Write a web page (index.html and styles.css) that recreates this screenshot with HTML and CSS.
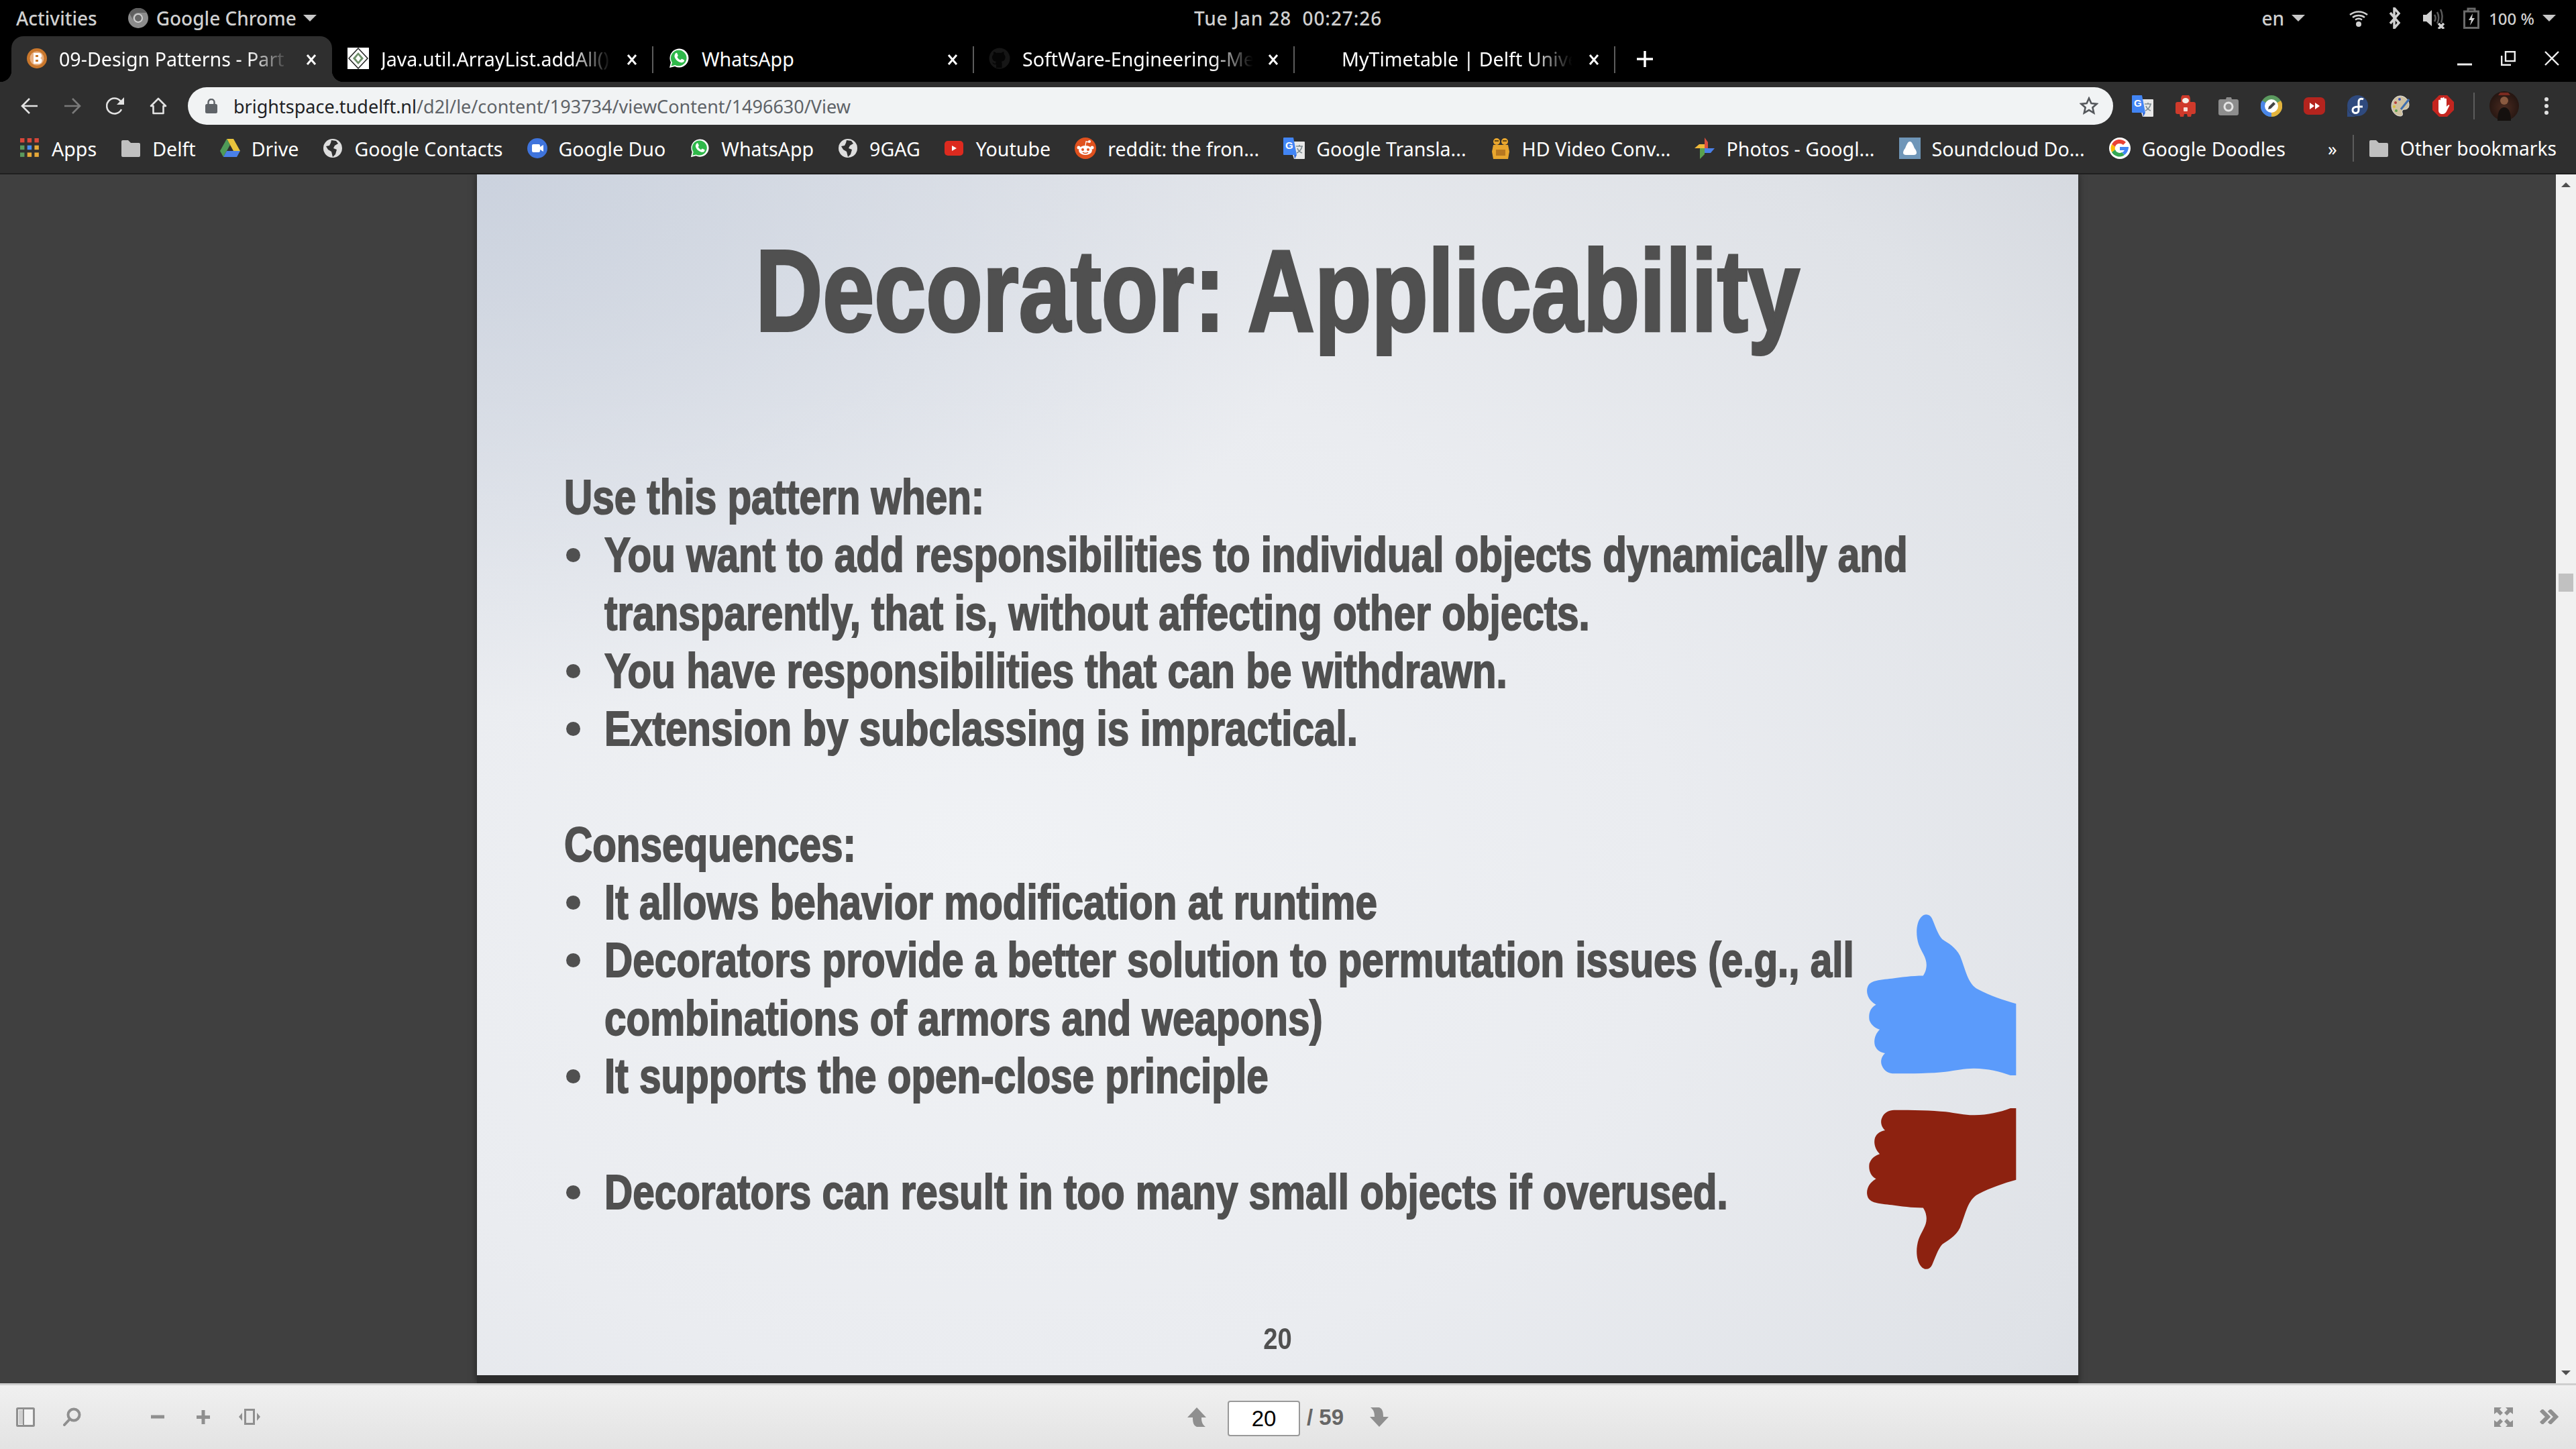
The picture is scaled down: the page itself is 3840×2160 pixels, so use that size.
FILE: index.html
```html
<!DOCTYPE html>
<html lang="en">
<head>
<meta charset="utf-8">
<title>Decorator: Applicability</title>
<link rel="stylesheet" href="styles.css">
</head>
<body>
<svg class="defs" width="0" height="0" aria-hidden="true">
  <defs>
    <symbol id="wa" viewBox="0 0 32 32"><path fill="#fff" d="M2 30l2-8A14 14 0 1 1 10 28z"/><path fill="#2fb84a" d="M4.500 27.500l1.500-5.300A11.800 11.800 0 1 1 10.300 26z"/><path fill="#fff" d="M11 8.500c1-1 2-.8 2.400 0l1.300 3c.2.600-.8 1.800-1.200 2.400 1 2 2.600 3.500 4.700 4.500.7-.6 1.700-2 2.400-1.700l3 1.500c.7.400.6 1.500 0 2.400-1 1.500-3 2-5 1.400-5-1.400-8-4.700-9-8.300-.4-1.700.3-3.800 1.400-5.200z"/></symbol>
    <symbol id="globe" viewBox="0 0 30 30"><circle cx="15" cy="15" r="14" fill="#dedede"/><path fill="#2f2f2f" d="M13 3l7 1 3 4-5 3-2 4 5 2-2 7-4 4-2-8-5-3-3-5 5-1 2-4z"/></symbol>
    <symbol id="folder" viewBox="0 0 30 30"><path fill="#c0c0c0" d="M1 5a2 2 0 0 1 2-2h8l4 4h12a2 2 0 0 1 2 2v17a2 2 0 0 1-2 2H3a2 2 0 0 1-2-2z"/></symbol>
    <symbol id="x" viewBox="0 0 16 16"><path d="M2 1l12 14M14 1L2 15" stroke="#fff" stroke-width="3"/></symbol>
    <symbol id="gt" viewBox="0 0 32 32"><path fill="#e8e8e8" d="M8 6h23a1 1 0 0 1 1 1v24a1 1 0 0 1-1 1H16z"/><path fill="#4285f4" d="M1 0h14l5 26H1a1 1 0 0 1-1-1V1a1 1 0 0 1 1-1z"/><path fill="#3367d6" d="M16 26h4l-3 6z"/><path d="M19 13h10M24 11v2M28 13c-1 5-5 9-8 10M21 16c1 3 4 6 7 7" fill="none" stroke="#7d8a90" stroke-width="1.600"/><text x="3" y="17" class="svg-g">G</text></symbol>
    <symbol id="hand" viewBox="240 100 680 640" preserveAspectRatio="none"><path d="M915 461C860 448 800 430 745 405C700 385 690 330 665 275C645 240 610 225 585 210C565 190 555 160 540 130C530 110 505 108 490 125C470 145 465 190 480 230C495 265 520 285 514 320C512 335 505 345 500 352C450 352 400 358 360 363C320 367 270 368 255 390C240 415 255 450 290 465C265 475 255 500 260 525C268 545 285 555 306 562C285 580 278 605 285 625C295 645 310 650 330 654C315 665 308 685 315 700C325 725 350 733 370 733C450 733 540 732 600 726C650 720 690 712 730 713C800 714 860 728 915 749Z"/></symbol>
  </defs>
</svg>

<header class="sysbar">
  <div class="sys-left">
    <span class="sys-activities">Activities</span>
    <span class="sys-app">
      <svg width="30" height="30" viewBox="0 0 30 30"><circle cx="15" cy="15" r="15" fill="#8c8c8c"/><path d="M15 7h13a15 15 0 0 0-26 1l6 11a8 8 0 0 1 7-12z" fill="#5f5f5f"/><circle cx="15" cy="15" r="7" fill="#d0d0d0"/><circle cx="15" cy="15" r="5" fill="#666"/></svg>
      <span>Google Chrome</span>
      <i class="caret caret-app"></i>
    </span>
  </div>
  <div class="sys-clock">Tue Jan 28&nbsp; 00:27:26</div>
  <div class="sys-right">
    <span class="sys-lang">en</span><i class="caret caret-lang"></i>
    <svg class="st-wifi" width="28" height="28" viewBox="0 0 28 28"><g fill="none" stroke="#d0d0d0" stroke-width="2.500"><path d="M1 9c8-6 18-6 26 0"/><path d="M5 13c5-4 13-4 18 0"/></g><path d="M9 16.500c3-2 7-2 10 0" fill="none" stroke="#d0d0d0" stroke-width="2.500"/><circle cx="14" cy="23" r="4" fill="#d0d0d0"/></svg>
    <svg class="st-bt" width="20" height="32" viewBox="0 0 20 32"><path d="M3 8l13 15-7 8V1l7 8L3 24" fill="none" stroke="#cfcfcf" stroke-width="3.500"/></svg>
    <svg class="st-vol" width="34" height="32" viewBox="0 0 34 32"><path fill="#d0d0d0" d="M0 11h5l8-7v24l-8-7H0z"/><path d="M17 11c2 3 2 7 0 10M21 7c3 5 3 12 0 17M26 3c3 6 3 14 1 20" fill="none" stroke="#5a5a5a" stroke-width="2.500"/><path d="M23 24l8 8M31 24l-8 8" stroke="#d0d0d0" stroke-width="3.500"/></svg>
    <svg class="st-bat" width="24" height="32" viewBox="0 0 24 32"><path d="M1.500 6h21v24.500h-21zM7 2h10v4H7z" fill="none" stroke="#6a6a6a" stroke-width="3"/><path fill="#d0d0d0" d="M14 9l-6 10h4l-2 8 7-11h-4z"/></svg>
    <span class="sys-batt">100 %</span><i class="caret caret-batt"></i>
  </div>
</header>

<nav class="tabstrip">
  <div class="tab tab-active">
    <svg class="fav" width="30" height="30" viewBox="0 0 30 30"><circle cx="15" cy="15" r="15" fill="#c9772c"/><circle cx="15" cy="15" r="10.500" fill="#e9b184"/><path d="M10 7h8a4 4 0 0 1 2 7.500 4.500 4.500 0 0 1-2 8.500h-8z" fill="#fff"/><path d="M13 10h4v3h-4zM13 17h4v3h-4z" fill="#c9772c"/></svg>
    <span class="tab-title">09-Design Patterns - Part</span>
    <svg class="tab-x" width="16" height="16"><use href="#x"/></svg>
  </div>
  <div class="tab">
    <svg class="fav" width="32" height="32" viewBox="0 0 32 32"><rect width="32" height="32" fill="#fff"/><path d="M16 1l14 15-14 15L2 16z" fill="none" stroke="#222" stroke-width="1.500"/><path d="M16 7l8 9-8 9-8-9z" fill="#6f8f6a"/><path d="M16 11l4 5-4 5-4-5z" fill="#fff"/></svg>
    <span class="tab-title">Java.util.ArrayList.addAll()</span>
    <svg class="tab-x" width="16" height="16"><use href="#x"/></svg>
  </div>
  <div class="tab">
    <svg class="fav" width="32" height="32"><use href="#wa"/></svg>
    <span class="tab-title tab-plain">WhatsApp</span>
    <svg class="tab-x" width="16" height="16"><use href="#x"/></svg>
  </div>
  <div class="tab">
    <svg class="fav" width="32" height="32" viewBox="0 0 32 32"><circle cx="16" cy="16" r="15.500" fill="#161616"/><path d="M11 30v-5c-4 1-5-2-6-3 2 0 3 2 5 2 0-2 1-3 1-3-4-1-6-3-6-7 0-2 1-3 2-4 0-1-.3-3 .3-4 1.500 0 3 1 4 2 2-.5 5-.5 7 0 1-1 2.500-2 4-2 .6 1 .3 3 .3 4 1 1 2 2 2 4 0 4-2 6-6 7 1 1 1 2 1 3v6z" fill="#050505"/></svg>
    <span class="tab-title">SoftWare-Engineering-Me</span>
    <svg class="tab-x" width="16" height="16"><use href="#x"/></svg>
  </div>
  <div class="tab">
    <span class="fav fav-blank"></span>
    <span class="tab-title">MyTimetable | Delft Unive</span>
    <svg class="tab-x" width="16" height="16"><use href="#x"/></svg>
  </div>
  <svg class="newtab" width="24" height="24" viewBox="0 0 24 24"><path d="M12 0v24M0 12h24" stroke="#fff" stroke-width="3.500"/></svg>
  <div class="winctl">
    <svg width="22" height="22" viewBox="0 0 22 22"><path d="M0 20h22" stroke="#eee" stroke-width="3"/></svg>
    <svg width="22" height="22" viewBox="0 0 22 22"><path d="M1.200 7v13.800H15" fill="none" stroke="#eee" stroke-width="2.400"/><rect x="7" y="1.200" width="13.800" height="13.800" fill="none" stroke="#eee" stroke-width="2.400"/></svg>
    <svg width="22" height="22" viewBox="0 0 22 22"><path d="M1 1l20 20M21 1L1 21" stroke="#eee" stroke-width="2.400"/></svg>
  </div>
</nav>

<div class="toolbar">
  <span class="tb-slot"><svg width="26" height="26" viewBox="0 0 26 26"><path d="M25 13H3M13 2L2 13l11 11" fill="none" stroke="#e2e2e2" stroke-width="2.600"/></svg></span>
  <span class="tb-slot"><svg width="26" height="26" viewBox="0 0 26 26"><path d="M1 13h22M13 2l11 11-11 11" fill="none" stroke="#7a7a7a" stroke-width="2.600"/></svg></span>
  <span class="tb-slot"><svg width="28" height="26" viewBox="0 0 28 26"><path d="M23 18a11.500 11.500 0 1 1-2-13l3 3" fill="none" stroke="#e2e2e2" stroke-width="2.600"/><path d="M27 0v11H16z" fill="#e2e2e2"/></svg></span>
  <span class="tb-slot"><svg width="26" height="26" viewBox="0 0 26 26"><path d="M2 13L13 2l11 11h-3.500v11h-15V13z" fill="none" stroke="#e2e2e2" stroke-width="2.600" stroke-linejoin="round"/></svg></span>
  <div class="omnibox">
    <svg class="lock" width="18" height="22" viewBox="0 0 18 22"><rect y="8" width="18" height="14" rx="2.500" fill="#5f6368"/><path d="M4.500 9V5.500a4.500 4.500 0 0 1 9 0V9" fill="none" stroke="#5f6368" stroke-width="2.400"/></svg>
    <span class="url"><b>brightspace.tudelft.nl</b>/d2l/le/content/193734/viewContent/1496630/View</span>
    <svg class="star" width="28" height="28" viewBox="0 0 28 28"><path d="M14 2.500l3.400 7.600 8.100.8-6.100 5.400 1.800 8L14 20.100 6.800 24.300l1.800-8-6.100-5.400 8.100-.8z" fill="none" stroke="#55585c" stroke-width="2.600"/></svg>
  </div>
  <div class="exts">
    <span class="tb-slot"><svg width="32" height="32"><use href="#gt"/></svg></span>
    <span class="tb-slot"><svg width="30" height="32" viewBox="0 0 30 32"><path fill="#cf3a2b" d="M8 5a7 7 0 0 1 14 0v5h5a3 3 0 0 1 3 3v12a3 3 0 0 1-3 3h-3l-1 4h-5l-1-4h-4l-1 4H7l-1-4H3a3 3 0 0 1-3-3V13a3 3 0 0 1 3-3h5z"/><ellipse cx="15" cy="8" rx="5" ry="4" fill="#f4efe8"/><rect x="12" y="18" width="6" height="6" rx="1" fill="#f6dcd6"/></svg></span>
    <span class="tb-slot"><svg width="30" height="28" viewBox="0 0 30 28"><path fill="#8d8d8d" d="M8 4h3l1-3h7l1 3h7a3 3 0 0 1 3 3v18a3 3 0 0 1-3 3H3a3 3 0 0 1-3-3V7a3 3 0 0 1 3-3h5z"/><circle cx="15" cy="15" r="7.500" fill="#e4e4e4"/><circle cx="15" cy="15" r="4.500" fill="#8d8d8d"/></svg></span>
    <span class="tb-slot"><svg width="32" height="32" viewBox="0 0 32 32"><circle cx="16" cy="16" r="16" fill="#5b9a5f"/><path d="M16 16L2 8a16 16 0 0 0 14 24z" fill="#4a86e8"/><path d="M16 16l14-8a16 16 0 0 1-14 24z" fill="#e3b33c"/><circle cx="16" cy="16" r="10" fill="#fff"/><path d="M11 21l1-4 7-7 3 3-7 7z" fill="#444"/></svg></span>
    <span class="tb-slot"><svg width="32" height="26" viewBox="0 0 32 26"><rect width="32" height="26" rx="7" fill="#b4241e"/><path d="M9 8l7 5-7 5zM17 8l7 5-7 5z" fill="#fff"/></svg></span>
    <span class="tb-slot"><svg width="31" height="32" viewBox="0 0 31 32"><circle cx="15.500" cy="15.500" r="15.500" fill="#2f4a7e"/><path d="M0 16v16h16a16 16 0 0 1-16-16z" fill="#2f4a7e"/><path d="M24 6c-4-2-7 0-7 4v12c0 6-9 6-9 0 0-3 3-5 8-5h7" fill="none" stroke="#fff" stroke-width="3"/></svg></span>
    <span class="tb-slot"><svg width="28" height="32" viewBox="0 0 28 32"><path fill="#cfc1a0" stroke="#e8e8e8" d="M14 1C7 1 1 8 1 16s6 15 13 15c4 0 4-3 3-5-1-3 1-5 4-5 4 0 6-3 6-7C27 7 21 1 14 1z"/><circle cx="13" cy="6" r="2" fill="#3b4fb5"/><circle cx="7" cy="11" r="2" fill="#b5403b"/><circle cx="5" cy="17" r="2" fill="#d8c23c"/><circle cx="8" cy="23" r="2" fill="#5da24d"/><path d="M27 6L15 21" stroke="#3f6fb0" stroke-width="3"/></svg></span>
    <span class="tb-slot"><svg width="32" height="32" viewBox="0 0 32 32"><path fill="#c4251f" d="M10 0h12l10 10v12L22 32H10L0 22V10z"/><path fill="#fff" d="M9 15V8a1.500 1.500 0 0 1 3 0V5a1.500 1.500 0 0 1 3 0v-.500a1.500 1.500 0 0 1 3 0V6a1.500 1.500 0 0 1 3 0v11l2-2c2-2 3 0 2 1l-4 8c-1 2-3 4-6 4-4 0-6-2-6-6z"/></svg></span>
  </div>
  <i class="tb-sep"></i>
  <svg class="avatar" width="44" height="44" viewBox="0 0 44 44"><defs><radialGradient id="av" cx="50%" cy="55%" r="60%"><stop offset="0" stop-color="#4a2a20"/><stop offset="1" stop-color="#20130f"/></radialGradient></defs><circle cx="22" cy="22" r="22" fill="url(#av)"/><circle cx="22" cy="14" r="6" fill="#8a5a40"/><path d="M12 44c0-14 4-20 10-20s10 6 10 20z" fill="#15100e"/><path d="M16 2h12l3 4H13z" fill="#7a2a20"/></svg>
  <svg class="menu" width="32" height="26" viewBox="0 0 32 26"><g fill="#e2e2e2"><circle cx="16" cy="3" r="3"/><circle cx="16" cy="13" r="3"/><circle cx="16" cy="23" r="3"/></g></svg>
</div>

<div class="bookmarks">
  <div class="bm-list">
    <span class="bm"><svg width="30" height="30" viewBox="0 0 28 28"><g class="apps"><rect width="6" height="6" fill="#d7473a"/><rect x="10" width="6" height="6" fill="#d7473a"/><rect x="20" width="6" height="6" fill="#d7473a"/><rect y="10" width="6" height="6" fill="#5a9a5e"/><rect x="10" y="10" width="6" height="6" fill="#4a8cf0"/><rect x="20" y="10" width="6" height="6" fill="#e6a838"/><rect y="20" width="6" height="6" fill="#5a9a5e"/><rect x="10" y="20" width="6" height="6" fill="#e6a838"/><rect x="20" y="20" width="6" height="6" fill="#e6a838"/></g></svg>Apps</span>
    <span class="bm"><svg width="30" height="30"><use href="#folder"/></svg>Delft</span>
    <span class="bm"><svg width="30" height="30" viewBox="0 0 30 30"><path fill="#e8c33c" d="M10 1h10l10 18H20z"/><path fill="#4f9a58" d="M10 1l5 9-10 18-5-9z"/><path fill="#4a80e8" d="M10 19h20l-5 9H5z"/></svg>Drive</span>
    <span class="bm"><svg width="30" height="30"><use href="#globe"/></svg>Google Contacts</span>
    <span class="bm"><svg width="30" height="30" viewBox="0 0 30 30"><circle cx="15" cy="15" r="15" fill="#3f74dc"/><rect x="7" y="9" width="12" height="12" rx="2" fill="#fff"/><path d="M19 13l5-3v10l-5-3z" fill="#fff"/></svg>Google Duo</span>
    <span class="bm"><svg width="30" height="30"><use href="#wa"/></svg>WhatsApp</span>
    <span class="bm"><svg width="30" height="30"><use href="#globe"/></svg>9GAG</span>
    <span class="bm"><svg width="30" height="30" viewBox="0 0 30 30"><rect x="0" y="4" width="28" height="22" rx="5" fill="#dd2a1f"/><path d="M11 11l7 4-7 4z" fill="#fff"/></svg>Youtube</span>
    <span class="bm"><svg width="32" height="32" viewBox="0 0 32 32"><circle cx="16" cy="16" r="16" fill="#e0511e"/><ellipse cx="16" cy="19" rx="10" ry="7" fill="#fff"/><circle cx="6" cy="15" r="2.500" fill="#fff"/><circle cx="26" cy="15" r="2.500" fill="#fff"/><circle cx="12" cy="18" r="2" fill="#e0511e"/><circle cx="20" cy="18" r="2" fill="#e0511e"/><circle cx="22" cy="6" r="2" fill="#fff"/><path d="M16 12l1-6 5 1" fill="none" stroke="#fff" stroke-width="1.300"/><path d="M12 22c2 2 6 2 8 0" fill="none" stroke="#e0511e" stroke-width="1.500"/></svg>reddit: the fron...</span>
    <span class="bm"><svg width="32" height="32"><use href="#gt"/></svg>Google Transla...</span>
    <span class="bm"><svg width="30" height="32" viewBox="0 0 30 32"><circle cx="9" cy="6" r="5" fill="#e8a62e"/><circle cx="21" cy="6" r="5" fill="#e8a62e"/><path d="M4 11h22l2 10-2 11H4L2 21z" fill="#e8a62e"/><rect x="8" y="18" width="14" height="9" fill="#b87820"/><path d="M6 5h6M18 5h6" stroke="#6a4a10" stroke-width="2"/></svg>HD Video Conv...</span>
    <span class="bm"><svg width="30" height="32" viewBox="0 0 30 32"><path fill="#d95040" d="M15 0l5 7v9h-5z"/><path fill="#f0b93a" d="M0 16l7-6h8v6z"/><path fill="#5aa14f" d="M15 16v9l-7 7v-16z"/><path fill="#4a80e8" d="M15 16h15l-6 7h-9z"/></svg>Photos - Googl...</span>
    <span class="bm"><svg width="32" height="32" viewBox="0 0 32 32"><rect width="32" height="32" fill="#6f96b8"/><path d="M16 6c3 0 5 5 7 10 2 2 3 5 3 7 0 2-2 3-4 3H10c-2 0-4-1-4-3 0-2 1-5 3-7 2-5 4-10 7-10z" fill="#fff"/></svg>Soundcloud Do...</span>
    <span class="bm"><svg width="32" height="32" viewBox="0 0 32 32"><circle cx="16" cy="16" r="16" fill="#fff"/><path d="M16 9a7 7 0 0 1 5 2l4-4A13 13 0 0 0 4 10l5 4a7 7 0 0 1 7-5z" fill="#ea4335"/><path d="M9 14l-5-4a13 13 0 0 0 0 12l5-4a7 7 0 0 1 0-4z" fill="#fbbc05"/><path d="M9 18l-5 4a13 13 0 0 0 19 4l-4-4a7 7 0 0 1-10-4z" fill="#34a853"/><path d="M29 14H16v5h7a6 6 0 0 1-4 3l4 4c4-3 6-8 6-12z" fill="#4285f4"/></svg>Google Doodles</span>
  </div>
  <div class="bm-right">
    <span class="bm-more">»</span>
    <i class="bm-sep"></i>
    <span class="bm bm-other"><svg width="30" height="30"><use href="#folder"/></svg>Other bookmarks</span>
  </div>
</div>

<main class="viewer">
  <div class="stage">
    <article class="slide">
      <h1 class="slide-title">Decorator: Applicability</h1>
      <div class="slide-body">
        <p class="ln">Use this pattern when:</p>
        <div class="item"><i class="dot"></i><div><p class="ln">You want to add responsibilities to individual objects dynamically and</p><p class="ln">transparently, that is, without affecting other objects.</p></div></div>
        <div class="item"><i class="dot"></i><div><p class="ln">You have responsibilities that can be withdrawn.</p></div></div>
        <div class="item"><i class="dot"></i><div><p class="ln">Extension by subclassing is impractical.</p></div></div>
        <div class="gap"></div>
        <p class="ln">Consequences:</p>
        <div class="item"><i class="dot"></i><div><p class="ln">It allows behavior modification at runtime</p></div></div>
        <div class="item"><i class="dot"></i><div><p class="ln">Decorators provide a better solution to permutation issues (e.g., all</p><p class="ln">combinations of armors and weapons)</p></div></div>
        <div class="item"><i class="dot"></i><div><p class="ln">It supports the open-close principle</p></div></div>
        <div class="gap"></div>
        <div class="item"><i class="dot"></i><div><p class="ln">Decorators can result in too many small objects if overused.</p></div></div>
      </div>
      <div class="slide-num">20</div>
      <svg class="hand hand-up" width="227" height="245"><use href="#hand"/></svg>
      <svg class="hand hand-down" width="227" height="245"><use href="#hand"/></svg>
    </article>
  </div>
  <aside class="scroll">
    <i class="sc-up"></i>
    <i class="sc-thumb"></i>
    <i class="sc-down"></i>
  </aside>
</main>

<footer class="pdfbar">
  <div class="pb-left">
    <svg width="28" height="29" viewBox="0 0 28 29"><rect x="1.500" y="1.500" width="25" height="26" rx="1" fill="#f4f4f4" stroke="#8f8f8f" stroke-width="3"/><rect x="4" y="4" width="6" height="21" fill="#cfcfcf"/><path d="M11 2v25" stroke="#8f8f8f" stroke-width="2"/></svg>
    <svg class="pb-search" width="27" height="28" viewBox="0 0 27 28"><circle cx="16" cy="11" r="8.500" fill="none" stroke="#8f8f8f" stroke-width="4"/><path d="M9.500 18L2 26" stroke="#8f8f8f" stroke-width="4" stroke-linecap="round"/></svg>
    <svg class="pb-minus" width="20" height="6" viewBox="0 0 20 6"><rect width="20" height="5" y=".5" fill="#8f8f8f"/></svg>
    <svg class="pb-plus" width="20" height="21" viewBox="0 0 20 21"><path d="M0 8h20v5H0zM7.500 0h5v21h-5z" fill="#8f8f8f"/></svg>
    <svg class="pb-fit" width="32" height="24" viewBox="0 0 32 24"><path d="M0 12l5-6v12zM32 12l-5-6v12z" fill="#8f8f8f"/><rect x="9.500" y="1.500" width="13" height="21" fill="#e8e8e8" stroke="#8f8f8f" stroke-width="3"/></svg>
  </div>
  <div class="pb-center">
    <svg width="28" height="29" viewBox="0 0 28 29"><path d="M14 0l14 15h-7c0 6 1 10 6 14H14c-5-2-6-7-6-14H0z" fill="#8f8f8f"/></svg>
    <div class="pb-page">20</div>
    <span class="pb-total">/ 59</span>
    <svg class="pb-down" width="28" height="29" viewBox="0 0 28 29"><path d="M14 29L0 14h7C7 8 6 4 1 0h13c5 2 6 7 6 14h8z" fill="#8f8f8f"/></svg>
  </div>
  <div class="pb-right">
    <svg width="28" height="29" viewBox="0 0 28 29"><path d="M0 0h11L8 3l5 5-4 4-5-5-4 3zM28 0H17l3 3-5 5 4 4 5-5 4 3zM0 29h11l-3-3 5-5-4-4-5 5-4-3zM28 29H17l3-3-5-5 4-4 5 5 4-3z" fill="#8f8f8f"/></svg>
    <svg class="pb-more" width="29" height="22" viewBox="0 0 29 22"><path d="M2 1l10 10L2 21M14 1l10 10-10 10" fill="none" stroke="#8f8f8f" stroke-width="6"/></svg>
  </div>
</footer>
</body>
</html>
```
FILE: styles.css
```css
* { box-sizing: border-box; }
html, body { margin: 0; padding: 0; }
body {
  width: 3840px;
  height: 2160px;
  overflow: hidden;
  display: flex;
  flex-direction: column;
  background: #000;
  font-family: "Noto Sans", "Liberation Sans", sans-serif;
}
.defs { position: absolute; }
svg { display: block; flex: none; }
.svg-g { font: bold 15px "Liberation Sans", sans-serif; fill: #fff; }

/* GNOME bar */
.sysbar {
  height: 54px;
  display: grid;
  grid-template-columns: 1fr auto 1fr;
  align-items: center;
  color: #d0d0d0;
  font-size: 28px;
  font-weight: 500;
}
.sys-left { display: flex; align-items: center; padding-left: 24px; }
.sys-app { display: flex; align-items: center; margin-left: 46px; gap: 12px; }
.sys-clock { white-space: pre; letter-spacing: .9px; }
.sys-right { display: flex; align-items: center; justify-content: flex-end; padding-right: 30px; }
.sys-batt { font-size: 24px; margin-left: 14px; }
.caret { display: block; width: 0; height: 0; border-left: 10px solid transparent; border-right: 10px solid transparent; border-top: 10px solid #c8c8c8; }
.caret-app { margin-left: -2px; }
.caret-lang { margin-left: 11px; }
.caret-batt { margin-left: 12px; }
.st-wifi { margin-left: 66px; }
.st-bt { margin-left: 30px; }
.st-vol { margin-left: 32px; }
.st-bat { margin-left: 26px; }

/* Tabs */
.tabstrip { height: 68px; display: flex; padding-left: 17px; background: #000; align-items: stretch; }
.tab {
  width: 478px;
  display: flex;
  align-items: center;
  padding: 0 0 2px 23px;
  position: relative;
  color: #fff;
  font-size: 28.600px;
}
.tab::after {
  content: "";
  position: absolute;
  right: -1px;
  top: 15px;
  height: 40px;
  width: 2px;
  background: #5c5c5c;
}
.tab-active { background: #2f2f2f; border-radius: 18px 18px 0 0; }
.tab-active::after { display: none; }
.tab-active::before {
  content: "";
  position: absolute;
  left: -17px;
  right: -17px;
  bottom: 0;
  height: 17px;
  z-index: 0;
  background:
    radial-gradient(circle at 0 0, #000 17px, #2f2f2f 17.5px) left bottom / 17px 17px no-repeat,
    radial-gradient(circle at 100% 0, #000 17px, #2f2f2f 17.5px) right bottom / 17px 17px no-repeat;
}
.fav { margin-right: 18px; position: relative; }
.fav-blank { width: 30px; height: 30px; display: block; flex: none; }
.tab-title {
  width: 358px;
  overflow: hidden;
  white-space: nowrap;
  position: relative;
  -webkit-mask-image: linear-gradient(to right, #000 79%, transparent 96%);
  mask-image: linear-gradient(to right, #000 79%, transparent 96%);
}
.tab-plain { -webkit-mask-image: none; mask-image: none; }
.tab-x { position: absolute; right: 23px; top: 27px; }
.newtab { align-self: center; margin-left: 33px; }
.winctl { margin-left: auto; display: flex; align-items: center; gap: 43px; padding-right: 25px; margin-top: -2px; }

/* Toolbar */
.toolbar { height: 64px; background: #2f2f2f; display: flex; align-items: flex-start; padding-left: 12px; }
.tb-slot { width: 64px; height: 56px; margin-top: 8px; display: flex; align-items: center; justify-content: center; flex: none; }
.omnibox {
  margin: 8px 0 0 12px;
  width: 2870px;
  height: 56px;
  border-radius: 28px;
  background: #f1f3f4;
  display: flex;
  align-items: center;
  padding-left: 26px;
  padding-right: 22px;
}
.url { margin-left: 24px; font-size: 27px; color: #5f6368; white-space: nowrap; }
.url b { font-weight: 400; color: #202124; }
.star { margin-left: auto; }
.exts { display: flex; margin-left: 12px; }
.tb-sep { display: block; width: 2px; height: 40px; background: #5c5c5c; margin: 16px 0 0 13px; }
.avatar { margin: 14px 0 0 22px; }
.menu { margin: 23px 0 0 25px; }

/* Bookmarks */
.bookmarks {
  height: 74px;
  background: #2f2f2f;
  border-bottom: 2px solid #1f1f1f;
  display: flex;
  justify-content: space-between;
  align-items: center;
  padding: 0 29px 2px 30px;
  color: #fff;
  font-size: 28.600px;
  white-space: nowrap;
}
.bm-list { display: flex; gap: 36px; }
.bm { display: flex; align-items: center; gap: 17px; height: 34px; }
.bm-other { font-size: 28.200px; }
.bm-right { display: flex; align-items: center; }
.bm-more { font-size: 27px; margin-right: 23px; }
.bm-sep { display: block; width: 2px; height: 40px; background: #5c5c5c; margin-right: 22px; }

/* Viewer */
.viewer { flex: 1; display: flex; min-height: 0; }
.stage {
  flex: 1;
  background: #404040;
  display: flex;
  justify-content: center;
  align-items: flex-start;
  overflow: hidden;
  padding-right: 1px;
}
.slide {
  position: relative;
  width: 2387px;
  height: 1802px;
  border-bottom: 12px solid #2c2c2c;
  padding: 85px 0 32px 130px;
  display: flex;
  flex-direction: column;
  overflow: hidden;
  color: #505050;
  font-family: "Liberation Sans", Arial, sans-serif;
  font-weight: 700;
  background:
    radial-gradient(ellipse 55% 45% at 0 0, #cbd2de 0%, rgba(203, 210, 222, 0) 100%),
    radial-gradient(ellipse 95% 95% at 32% 58%, #f0f2f5 0%, #eaecf0 45%, #dfe2e7 80%, #d2d6dd 100%);
  box-shadow: 0 0 10px #222;
}
.slide-title {
  margin: 0 0 177px -130px;
  font-size: 172px;
  line-height: 176px;
  font-weight: 700;
  text-align: center;
  white-space: nowrap;
  transform: scaleX(.805);
  -webkit-text-stroke: 4px #505050;
}
.slide-body { font-size: 73px; line-height: 86.300px; -webkit-text-stroke: 2px #505050; }
.ln { margin: 0; white-space: nowrap; transform: scaleX(.8); transform-origin: left center; }
.item { display: flex; }
.dot { display: block; flex: none; width: 21px; height: 21px; border-radius: 50%; background: #505050; margin: 33px 36px 0 3px; }
.gap { height: 86.300px; }
.slide-num { margin-top: auto; margin-left: -130px; font-size: 45px; line-height: 45px; text-align: center; transform: scaleX(.85); }
.hand { position: absolute; left: 2069px; fill: #5b9bfb; }
.hand-up { top: 1098px; }
.hand-down { top: 1392px; fill: #8d2210; transform: scaleY(-1); }

/* Scrollbar */
.scroll { width: 30px; background: #f1f1f1; position: relative; }
.sc-up, .sc-down { position: absolute; left: 8px; width: 0; height: 0; border-left: 7px solid transparent; border-right: 7px solid transparent; }
.sc-up { top: 12px; border-bottom: 7px solid #505050; }
.sc-down { bottom: 12px; border-top: 7px solid #505050; }
.sc-thumb { position: absolute; top: 595px; left: 4px; width: 22px; height: 27px; background: #c1c1c1; }

/* PDF toolbar */
.pdfbar {
  height: 98px;
  display: grid;
  grid-template-columns: 1fr auto 1fr;
  align-items: center;
  background: linear-gradient(#f0f0f0, #e3e3e3);
  border-top: 3px solid #cfcfcf;
  padding-bottom: 1px;
}
.pb-left { display: flex; align-items: center; padding-left: 24px; }
.pb-search { margin-left: 42px; }
.pb-minus { margin-left: 104px; }
.pb-plus { margin-left: 48px; }
.pb-fit { margin-left: 43px; }
.pb-center { display: flex; align-items: center; width: 300px; }
.pb-page {
  margin: 4px 0 0 32px;
  width: 108px;
  height: 53px;
  background: #fff;
  border: 2px solid #999;
  border-radius: 4px;
  text-align: center;
  font: 33px/49px "Liberation Sans", Arial, sans-serif;
  color: #000;
}
.pb-total { margin: 2px 0 0 10px; font: 700 33px "Liberation Sans", Arial, sans-serif; color: #666; white-space: nowrap; }
.pb-down { margin-left: auto; }
.pb-right { display: flex; align-items: center; justify-content: flex-end; padding-right: 25px; }
.pb-more { margin-left: 40px; }
```
